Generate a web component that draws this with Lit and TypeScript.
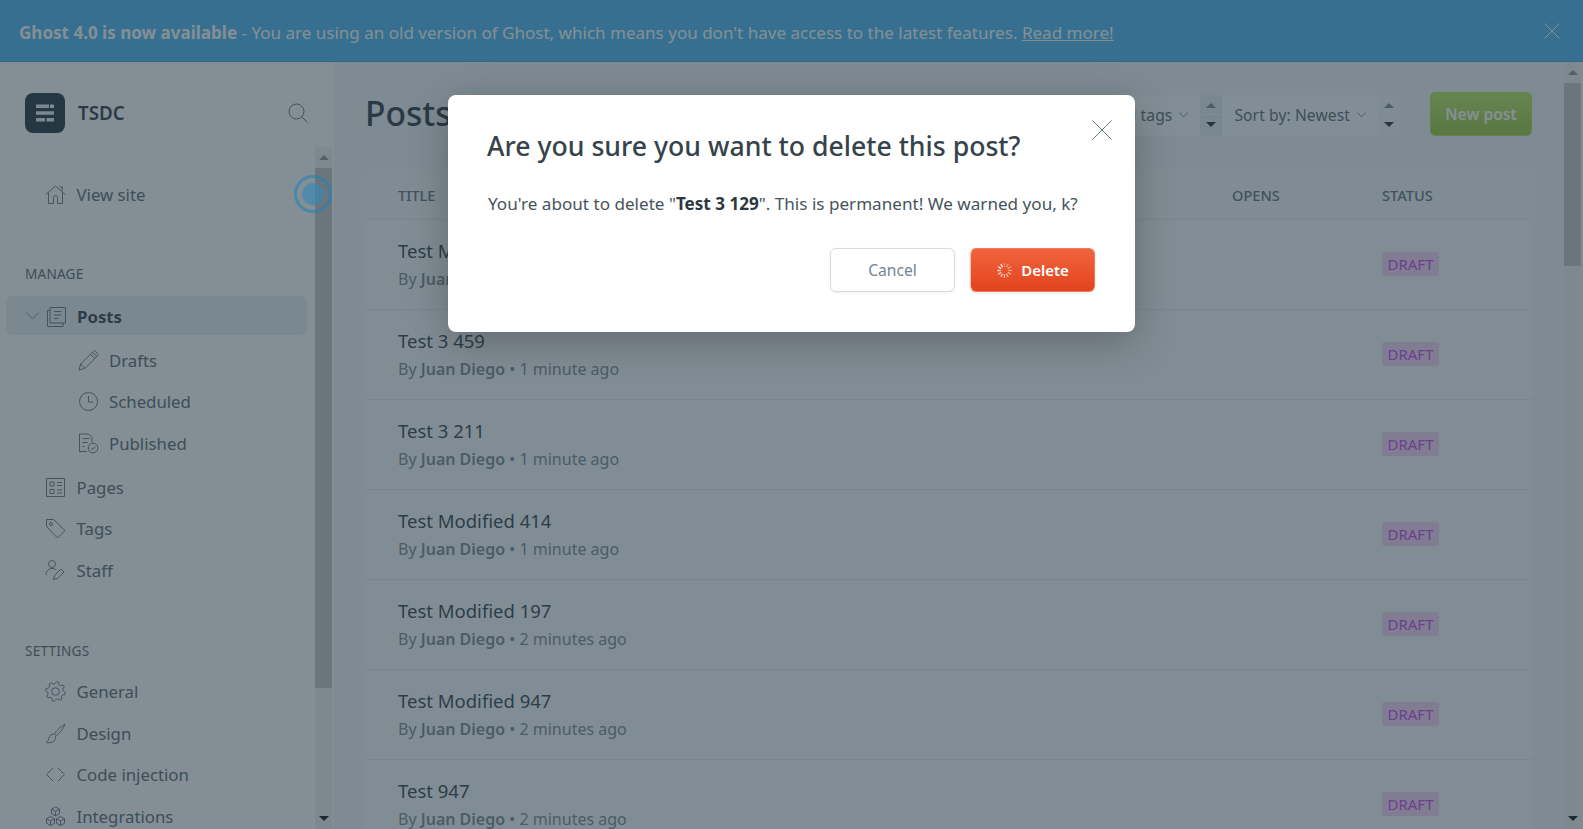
import { LitElement, css, html, svg } from "lit";
import { customElement } from "lit/decorators.js";

// eight lobed outline for the settings icon
const gear = Array.from({ length: 32 }, (_, i) => {
  const a = ((i + 0.5) * Math.PI) / 16 - Math.PI / 2;
  const r = [9.9, 9.9, 7.7, 7.7][i % 4];
  return `${(10.5 + r * Math.cos(a)).toFixed(2)} ${(10.5 + r * Math.sin(a)).toFixed(2)}`;
}).join(" L");

const icons: Record<string, unknown> = {
  home: svg`<path d="M.8 10.500 10.500 2l9.700 8.500M3.500 8.500V19.500h5v-6a2 2 0 0 1 4 0v6h5V8.500M14.500 3h2.800v4"/>`,
  posts: svg`<path d="M4 1.500h15.500v15.500H4zM8 5.500h7.500M8 9h7.500M8 12.500h4.500M4 4.500H1.500v16H17V17"/>`,
  pencil: svg`<path d="M1 20l1.700-6L14.500 2.200 18.800 6.500 7 18.300zM2.700 14 7 18.300M12.500 4.200l4.300 4.300M15.300 1.300a1.500 1.500 0 0 1 2 0l2.400 2.400a1.500 1.500 0 0 1 0 2l-.9.800"/>`,
  clock: svg`<circle cx="10.500" cy="10.500" r="9"/><path d="M10.500 5v6H15"/>`,
  published: svg`<path d="M9 18.500H1.500V1h9L14 4.500v4.500M4.500 5.500h7M4.500 9.500h5M4.500 13.500h2"/><circle cx="15" cy="15" r="4.800"/><path d="m12.800 15 1.700 1.700 2.800-3"/>`,
  pages: svg`<path d="M1.500 1.500h18v18h-18zM5 5h4v4H5zM5 12.500h4v4H5zM12 5.500h5M12 8.500h5M12 13h5M12 16h5"/>`,
  tag: svg`<path d="M1.500 1.500h7l11.500 11-7.500 7.500L1.500 8.500z"/><circle cx="6" cy="6" r="1.500"/>`,
  staff: svg`<circle cx="7" cy="4" r="3.500"/><path d="M1 15c0-4 3-6.500 6-6.500 2 0 3.500.7 4.500 1.700M8.500 19.500l1-4 6.500-6.500 3 3L12.500 18.500z"/>`,
  gear: svg`<path d="M${gear}Z" stroke-linejoin="round"/><circle cx="10.500" cy="10.500" r="3.800"/>`,
  brush: svg`<path d="M20 1c-3 1.500-8 6-10.500 9.500l2 2C15 10 18.500 5 20 1zM9 11c-3 0-4.500 1.800-5 4-.3 1.500-1.500 3-2.500 4.500 3.500.8 8-.2 9-4 .3-1.200.3-2-.1-2.800"/>`,
  code: svg`<path d="M8 4 1.500 10.500 8 17M13 4l6.500 6.500L13 17"/>`,
  cubes: svg`<path d="M10.500 1 14.500 3.200v4.300L10.500 10 6.500 7.500V3.200zM6.500 3.200l4 2.300 4-2.300M10.500 5.500V10M5.500 10.500l4 2.200v4.500l-4 2.300-4-2.300v-4.500zM1.500 12.700l4 2.300 4-2.300M5.500 15v4.500M15.500 10.500l4 2.200v4.500l-4 2.300-4-2.300v-4.500zM11.500 12.700l4 2.300 4-2.300M15.500 15v4.500"/>`,
};

const icon = (name: string) =>
  html`<svg class="ico" viewBox="0 0 21 21">${icons[name]}</svg>`;

const ticks = Array.from({ length: 12 }, (_, i) => i * 30);

const rows = [
  ["Test Modified 129", "1 minute ago"],
  ["Test 3 459", "1 minute ago"],
  ["Test 3 211", "1 minute ago"],
  ["Test Modified 414", "1 minute ago"],
  ["Test Modified 197", "2 minutes ago"],
  ["Test Modified 947", "2 minutes ago"],
  ["Test 947", "2 minutes ago"],
];

@customElement("app-root")
export class AppRoot extends LitElement {
  static styles = css`
    :host {
      display: block;
      position: relative;
      height: 829px;
      overflow: hidden;
      font-family: "Noto Sans", "Open Sans", sans-serif;
      color: #2a3338;
      background: #f4f8fb;
    }
    svg.ico {
      width: 21px;
      height: 21px;
      fill: none;
      stroke: #5d6d77;
      stroke-width: 1;
      flex: none;
    }

    .banner {
      height: 61px;
      border-bottom: 1px solid #2f9fdc;
      background: #3eb0ef;
      color: #fff;
      display: flex;
      align-items: center;
      justify-content: space-between;
      padding: 0 23px 0 19px;
      font-size: 17.05px;
      box-sizing: content-box;
    }
    .banner span { padding-top: 3px; }
    .banner b { font-weight: 700; }
    .banner a { color: inherit; text-decoration: underline; }
    .banner svg { width: 16px; height: 16px; stroke: #fff; stroke-width: 1; fill: none; }

    .body { display: flex; height: 767px; }

    .side {
      width: 334px;
      flex: none;
      background: #fdfefe;
      border-right: 1px solid #f0f3f5;
      display: flex;
      flex-direction: column;
      overflow: hidden;
      box-sizing: content-box;
    }
    .side-head {
      height: 85px;
      flex: none;
      display: flex;
      align-items: center;
      padding: 16px 26px 0 25px;
      gap: 13px;
      box-sizing: border-box;
    }
    .logo {
      width: 40px;
      height: 40px;
      border-radius: 8px;
      background: #112534;
      display: flex;
      align-items: center;
      justify-content: center;
    }
    .logo svg { width: 20px; height: 20px; fill: #e8eef1; }
    .brand { font-size: 18.8px; font-weight: 600; flex: 1; color: #1d2c35; }
    .search { width: 20px; height: 20px; fill: none; stroke: #53636d; stroke-width: 1; }

    .side-scroll { flex: 1; display: flex; min-height: 0; }
    .nav { flex: 1; min-width: 0; padding-top: 27px; }
    .bar {
      width: 17px;
      flex: none;
      margin-right: 2px;
      background: #f1f1f1;
      display: flex;
      flex-direction: column;
      align-items: center;
    }
    .bar .arrow { height: 21px; flex: none; display: flex; align-items: center; justify-content: center; }
    .arrow i { display: block; width: 0; height: 0; border-left: 5px solid transparent; border-right: 5px solid transparent; }
    .arrow.up i { border-bottom: 5px solid #8a8a8a; }
    .arrow.down i { border-top: 5px solid #000; }
    .thumb { width: 100%; background: #c1c1c1; flex: none; }
    .grow { flex: 1; }

    .item {
      height: 41.4px;
      display: flex;
      align-items: center;
      gap: 10.5px;
      padding-left: 45px;
      font-size: 16.8px;
      color: #4d5c65;
    }
    .item.sub { padding-left: 78px; gap: 10px; }
    .item.sub.last { margin: 1px 0 2px; }
    .label {
      margin: 0;
      font-size: 13.6px;
      color: #4d5c65;
      letter-spacing: 0.2px;
      padding-left: 25px;
      line-height: 18px;
    }
    .manage { margin-top: 50px; margin-bottom: 13px; }
    .settings { margin-top: 51px; margin-bottom: 11.5px; }
    .active {
      height: 39px;
      margin: 0 0 4px 6px;
      width: 301px;
      padding: 1px 0 0 20px;
      border-radius: 6px;
      background: #e6edf1;
      font-weight: 700;
      box-sizing: border-box;
      color: #26343d;
    }
    .active .chev { width: 13px; height: 8px; fill: none; stroke: #7c8b95; stroke-width: 1; margin-right: -4px; }

    .main { flex: 1; min-width: 0; display: flex; background: #f1f5f8; }
    .content { flex: 1; min-width: 0; padding: 30px 32px 0 30px; overflow: hidden; }
    .top { display: flex; align-items: center; height: 44px; }
    .top h1 { margin: 0 0 2px; font-size: 33.6px; font-weight: 500; color: #1d2c35; flex: 1; }
    .filters { display: flex; height: 41px; background: #f4f8fb; border-radius: 4px; margin: 2px 30px 0 0; }
    .sel {
      display: flex;
      align-items: center;
      gap: 7px;
      font-size: 15.6px;
      letter-spacing: 0.1px;
      color: #4d5c65;
      background: #fbfdfe;
      padding: 0 12px;
    }
    .sel svg { width: 9px; height: 6px; fill: none; stroke: #7c8b95; stroke-width: 1; }
    .stepper { width: 22px; display: flex; flex-direction: column; align-items: center; justify-content: center; background: #e4eaee; }
    .stepper i { display: block; width: 0; height: 0; border-left: 5px solid transparent; border-right: 5px solid transparent; }
    .stepper .u { border-bottom: 5px solid #6f7f89; }
    .stepper .d { border-top: 5px solid #1a2328; }
    .stepper span { width: 17px; height: 1px; background: #fdfefe; margin: 6px 0 7px; }
    .stepper.last { background: transparent; }
    .new {
      width: 102px;
      height: 44px;
      box-sizing: border-box;
      border-radius: 5px;
      border: 1px solid #a9dc4c;
      background: linear-gradient(#b4e650, #96c334);
      color: #fff;
      font-size: 15.6px;
      font-weight: 600;
      display: flex;
      align-items: center;
      justify-content: center;
    }

    .table {
      margin-top: 34px;
      background: #f8fbfc;
      border-radius: 6px 6px 0 0;
    }
    .thead {
      height: 49px;
      border-bottom: 1px solid #e3e9ed;
      display: flex;
      align-items: center;
      padding-left: 33px;
      font-size: 14.6px;
      font-weight: 500;
      color: #556771;
      background: #f4f8fb;
      border-radius: 6px 6px 0 0;
    }
    .c1 { flex: 1; }
    .c2 { width: 150px; }
    .c3 { width: 150px; }
    .row {
      height: 90px;
      box-sizing: border-box;
      border-bottom: 1px solid #e3e9ed;
      display: flex;
      align-items: center;
      padding-left: 33px;
    }
    .row .c3 { padding-bottom: 2px; box-sizing: border-box; }
    .name { font-size: 18.5px; font-weight: 400; color: #26343d; line-height: 24px; margin-top: -2px; }
    .meta { font-size: 16px; color: #6f808b; margin-top: 6px; line-height: 20px; }
    .meta b { font-weight: 600; }
    .badge {
      display: block;
      width: 57px;
      height: 24px;
      line-height: 24px;
      text-align: center;
      border-radius: 3px;
      background: #f5d0f8;
      color: #c737ee;
      font-size: 15px;
      font-weight: 400;
    }

    .overlay {
      position: absolute;
      inset: 0;
      background: rgba(50, 68, 79, 0.6);
      display: flex;
      justify-content: center;
      padding-top: 95px;
      box-sizing: border-box;
    }
    /* the hint dot sits above the dimmed layer, so it keeps its colour */
    .pulse {
      position: absolute;
      left: 294px;
      top: 175px;
      width: 38px;
      height: 38px;
      box-sizing: border-box;
      border: 3px solid rgba(30, 130, 190, 0.55);
      border-radius: 50%;
      display: flex;
      align-items: center;
      justify-content: center;
    }
    .pulse i { display: block; width: 22px; height: 22px; border-radius: 50%; background: rgba(55, 135, 185, 0.65); }
    .modal {
      position: relative;
      width: 687px;
      height: 237px;
      box-sizing: border-box;
      background: #fff;
      border-radius: 8px;
      padding: 32px 40px 32px 39px;
      box-shadow: 0 10px 40px rgba(0, 0, 0, 0.25);
      display: flex;
      flex-direction: column;
    }
    .modal h2 { margin: 0; font-size: 26.65px; font-weight: 500; line-height: 38px; color: #36434b; }
    .modal p { margin: 27px 0 0 1px; font-size: 17.1px; line-height: 24px; color: #47545c; }
    .modal p b { font-weight: 700; color: #2b3840; }
    .close { position: absolute; top: 25px; right: 23px; width: 20px; height: 20px; stroke: #6a7a84; stroke-width: 1; fill: none; }
    .actions { display: flex; justify-content: flex-end; gap: 15px; margin-top: 32px; }
    .btn {
      width: 125px;
      height: 44px;
      box-sizing: border-box;
      border-radius: 6px;
      font-size: 15.6px;
      display: flex;
      align-items: center;
      justify-content: center;
      gap: 8px;
    }
    .cancel {
      border: 1px solid #d4dde2;
      background: #fff;
      color: #75858f;
      box-shadow: 0 1px 3px rgba(0, 0, 0, 0.06);
    }
    .delete {
      border: 1px solid #f0795a;
      border-left-color: #f9c4b5;
      background: linear-gradient(#f0643f, #e2431c);
      color: #fff;
      font-size: 15px;
      font-weight: 600;
      box-shadow: 0 1px 3px rgba(0, 0, 0, 0.1);
    }
    .delete svg { width: 17px; height: 17px; stroke: #fff; stroke-width: 1.2; }
  `;

  render() {
    return html`
      <div class="banner">
        <span><b>Ghost 4.0 is now available</b> - You are using an old version of Ghost, which means you don't have access to the latest features. <a>Read more!</a></span>
        <svg viewBox="0 0 16 16"><path d="M.5.5l15 15M15.500.5l-15 15"/></svg>
      </div>
      <div class="body">
        <aside class="side">
          <div class="side-head">
            <div class="logo">
              <svg viewBox="0 0 20 20"><path d="M1 1.500h13v3.500H1zM15 1.500h4v3.500h-4zM1 8.300h18v3.500H1zM1 15h9v3.500H1zM11.500 15H19v3.500h-7.500z"/></svg>
            </div>
            <div class="brand">TSDC</div>
            <svg class="search" viewBox="0 0 20 20"><circle cx="8.500" cy="8.500" r="7.500"/><path d="m14 14 5.500 5.500"/></svg>
          </div>
          <div class="side-scroll">
            <div class="nav">
              <div class="item">${icon("home")}View site</div>
              <p class="label manage">MANAGE</p>
              <div class="item active">
                <svg class="chev" viewBox="0 0 13 8"><path d="m.5.5 6 6.500 6-6.500"/></svg>
                ${icon("posts")}Posts
              </div>
              <div class="item sub">${icon("pencil")}Drafts</div>
              <div class="item sub">${icon("clock")}Scheduled</div>
              <div class="item sub last">${icon("published")}Published</div>
              <div class="item">${icon("pages")}Pages</div>
              <div class="item">${icon("tag")}Tags</div>
              <div class="item">${icon("staff")}Staff</div>
              <p class="label settings">SETTINGS</p>
              <div class="item">${icon("gear")}General</div>
              <div class="item">${icon("brush")}Design</div>
              <div class="item">${icon("code")}Code injection</div>
              <div class="item">${icon("cubes")}Integrations</div>
            </div>
            <div class="bar">
              <div class="arrow up"><i></i></div>
              <div class="thumb" style="height:520px"></div>
              <div class="grow"></div>
              <div class="arrow down"><i></i></div>
            </div>
          </div>
        </aside>
        <main class="main">
          <div class="content">
            <div class="top">
              <h1>Posts</h1>
              <div class="filters">
                <div class="sel">All tags <svg viewBox="0 0 9 6"><path d="m.5.5 4 4.500 4-4.500"/></svg></div>
                <div class="stepper"><i class="u"></i><span></span><i class="d"></i></div>
                <div class="sel">Sort by: Newest <svg viewBox="0 0 9 6"><path d="m.5.5 4 4.500 4-4.500"/></svg></div>
                <div class="stepper last"><i class="u"></i><span></span><i class="d"></i></div>
              </div>
              <div class="new">New post</div>
            </div>
            <div class="table">
              <div class="thead">
                <div class="c1">TITLE</div>
                <div class="c2">OPENS</div>
                <div class="c3">STATUS</div>
              </div>
              ${rows.map(
                ([title, time]) => html`
                  <div class="row">
                    <div class="c1">
                      <div class="name">${title}</div>
                      <div class="meta">By <b>Juan Diego</b> • ${time}</div>
                    </div>
                    <div class="c2"></div>
                    <div class="c3"><span class="badge">DRAFT</span></div>
                  </div>
                `
              )}
            </div>
          </div>
          <div class="bar">
            <div class="arrow up"><i></i></div>
            <div class="thumb" style="height:183px"></div>
            <div class="grow"></div>
            <div class="arrow down"><i></i></div>
          </div>
        </main>
      </div>
      <div class="overlay">
        <div class="pulse"><i></i></div>
        <div class="modal">
          <h2>Are you sure you want to delete this post?</h2>
          <p>You're about to delete "<b>Test 3 129</b>". This is permanent! We warned you, k?</p>
          <div class="actions">
            <div class="btn cancel">Cancel</div>
            <div class="btn delete">
              <svg viewBox="0 0 16 16">${ticks.map(
                (a, i) => svg`<line x1="8" y1="1" x2="8" y2="4.500" opacity=${0.35 + i * 0.055} transform="rotate(${a} 8 8)"/>`
              )}</svg>
              Delete
            </div>
          </div>
          <svg class="close" viewBox="0 0 20 20"><path d="M.5.5l19 19M19.500.5l-19 19"/></svg>
        </div>
      </div>
    `;
  }
}
